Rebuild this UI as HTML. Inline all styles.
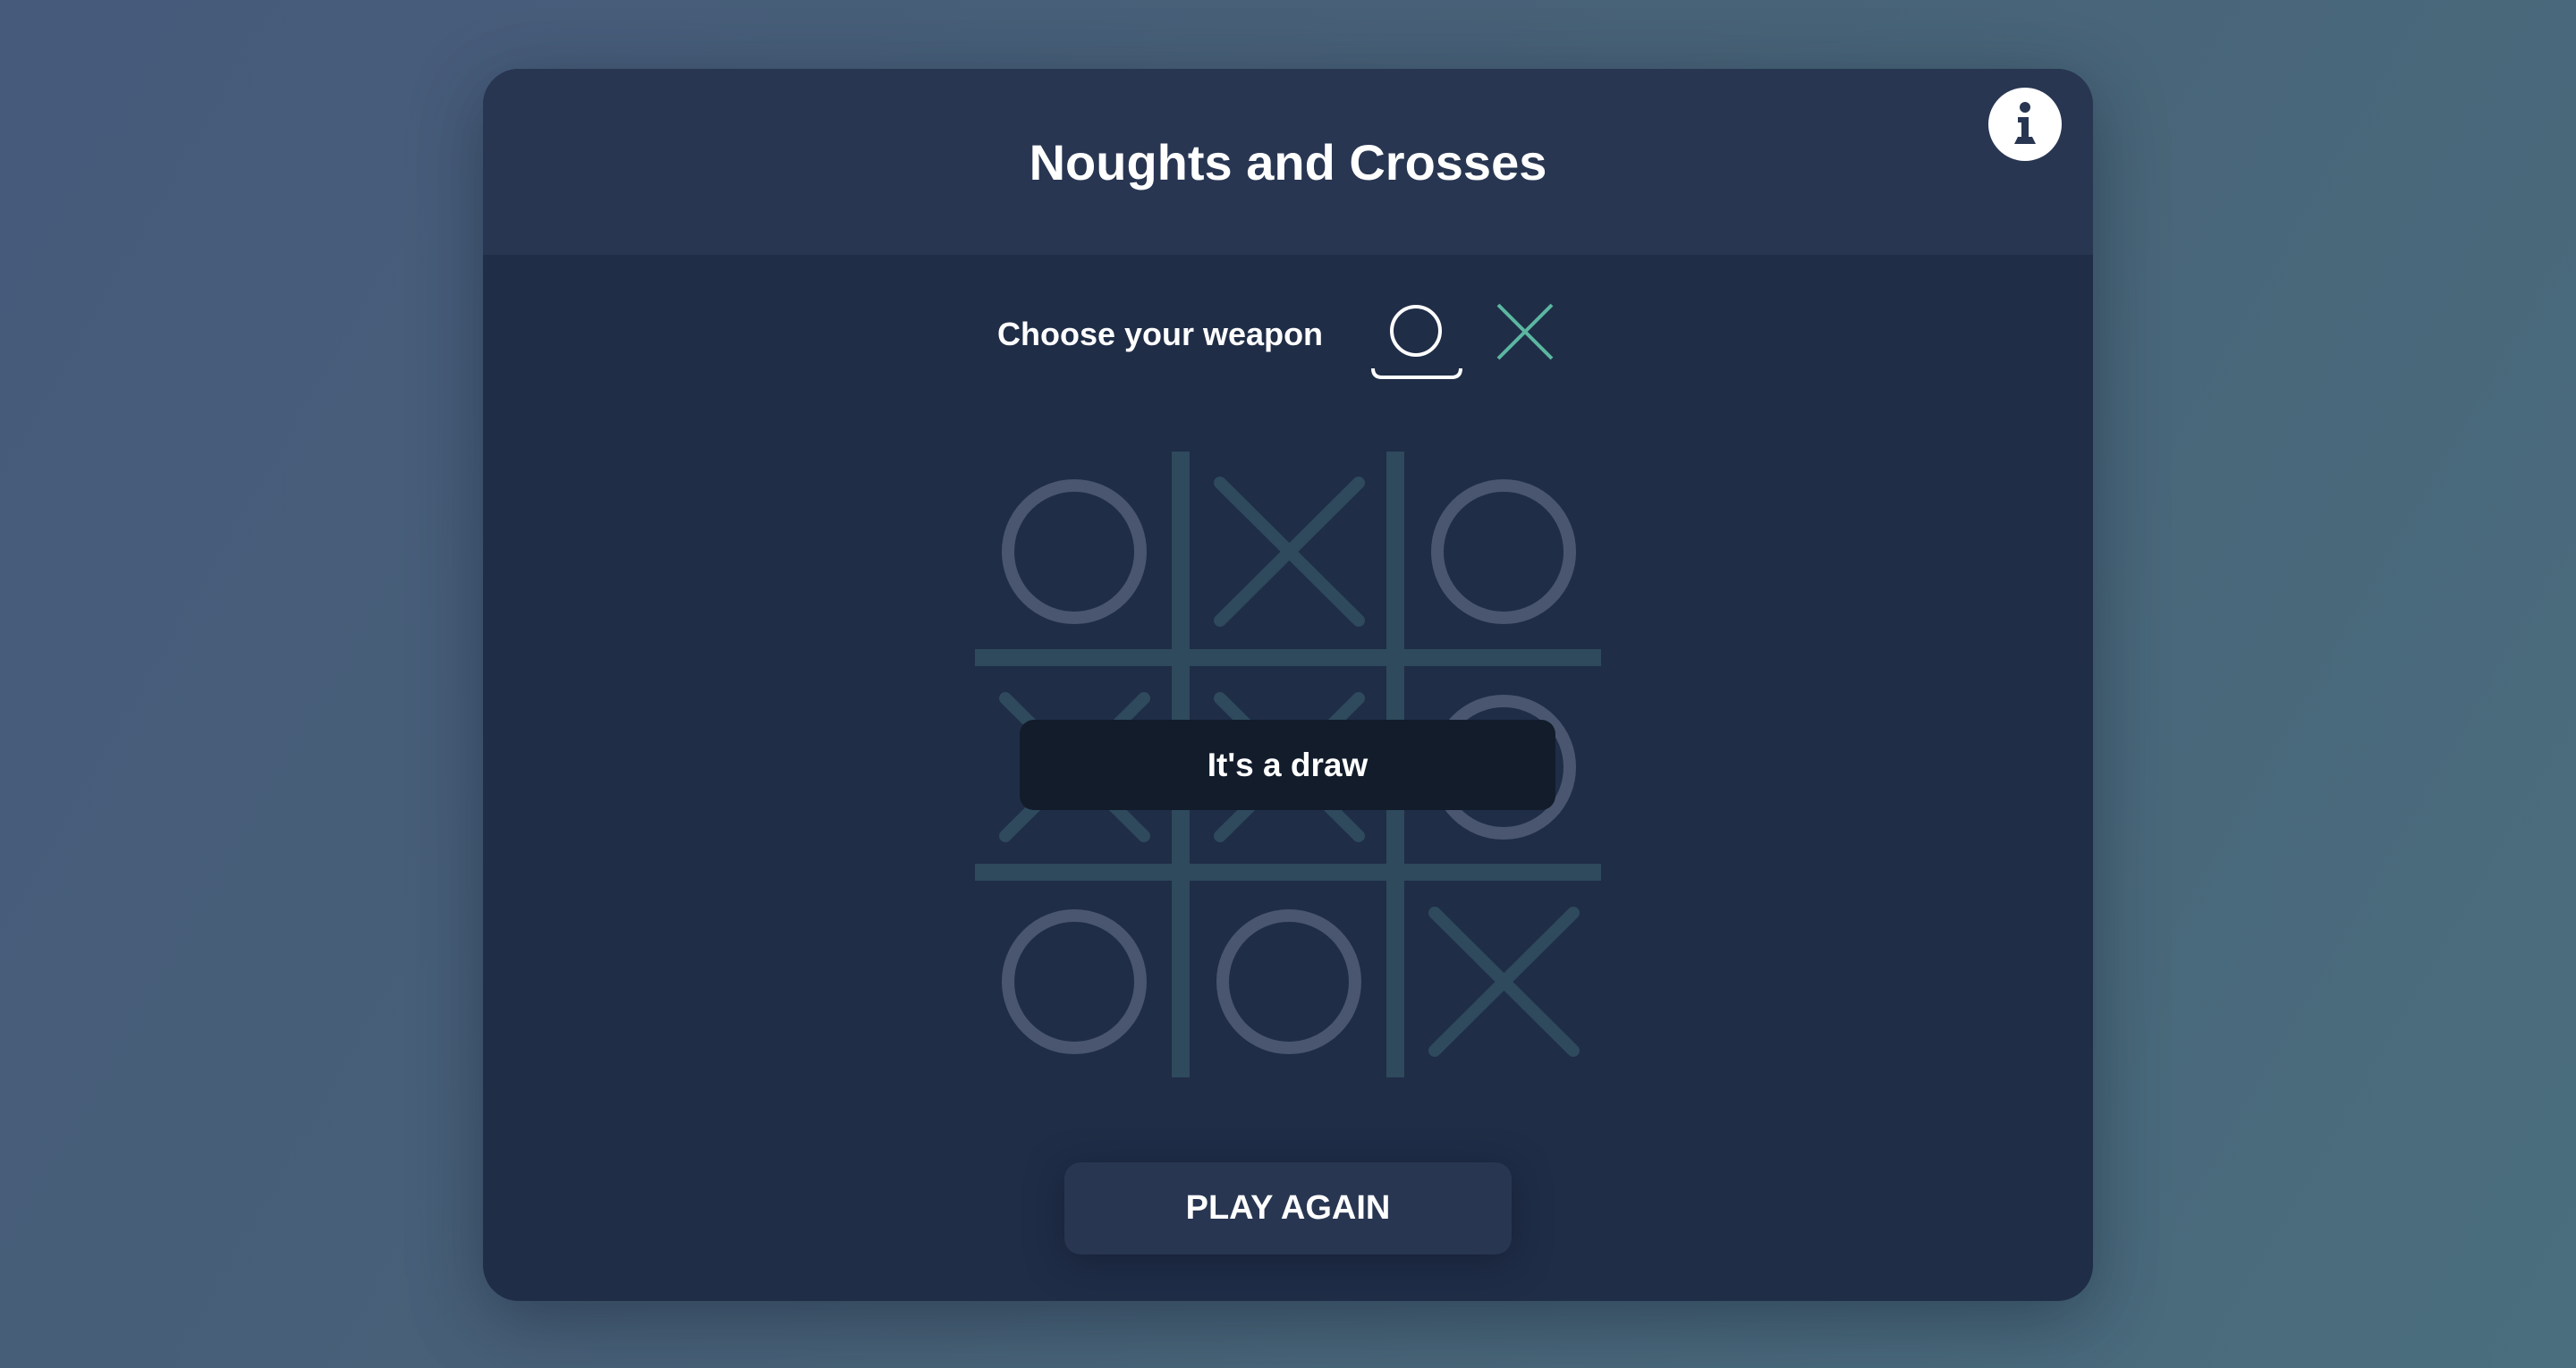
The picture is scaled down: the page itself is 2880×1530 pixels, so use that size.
<!DOCTYPE html>
<html><head><style>
html,body{margin:0;padding:0}
body{width:2880px;height:1530px;overflow:hidden;background:linear-gradient(120deg,#465a7b 0%,#486277 50%,#4a6e7e 100%);font-family:"Liberation Sans",Arial,sans-serif;position:relative}
.card{position:absolute;left:540px;top:77px;width:1800px;height:1378px;border-radius:40px;background:#1f2d47;overflow:hidden;box-shadow:0 20px 80px rgba(20,30,50,.45)}
.head{position:absolute;left:0;top:0;width:100%;height:208px;background:#283652}
.title{position:absolute;left:0;width:100%;top:70px;text-align:center;color:#fff;font-size:56px;font-weight:bold;line-height:70px}
.info{position:absolute;left:1683px;top:21px;width:82px;height:82px;border-radius:50%;background:#fff}
.weapon{position:absolute;left:575px;top:272px;color:#fff;font-size:36px;font-weight:bold;line-height:50px}
.btn{position:absolute;left:650px;top:1223px;width:500px;height:103px;border-radius:18px;background:#283652;color:#fff;font-size:38px;font-weight:bold;text-align:center;line-height:103px;box-shadow:0 8px 40px rgba(15,22,38,.5)}
.draw{position:absolute;left:600px;top:728px;width:599px;height:101px;border-radius:16px;background:#121c2b;color:#fff;font-size:37px;font-weight:bold;text-align:center;line-height:101px}
</style></head><body>
<div class="card">
 <div class="head"></div>
 <div class="title">Noughts and Crosses</div>
 <div class="info"><svg width="82" height="82" viewBox="0 0 82 82"><circle cx="41" cy="22" r="6" fill="#283652"/><path d="M33 33h12v22h4l4 8H29l4-8h4V39h-4z" fill="#283652"/></svg></div>
 <div class="weapon">Choose your weapon</div>
 <svg style="position:absolute;left:990px;top:250px" width="220" height="120" viewBox="0 0 220 120">
  <circle cx="53" cy="43" r="27" fill="none" stroke="#fff" stroke-width="4"/>
  <path d="M5 85q0 10 10 10h78q10 0 10-10" fill="none" stroke="#fff" stroke-width="4"/>
  <path d="M145 14l60 60M205 14l-60 60" stroke="#5bb7a0" stroke-width="4"/>
 </svg>
 <svg style="position:absolute;left:0;top:0" width="1800" height="1378" viewBox="540 77 1800 1378">
  <g fill="#2e4a5c">
   <rect x="1310" y="505" width="20" height="700"/>
   <rect x="1550" y="505" width="20" height="700"/>
   <rect x="1090" y="726" width="700" height="19"/>
   <rect x="1090" y="966" width="700" height="19"/>
  </g>
  <g fill="none" stroke="#4a5670" stroke-width="14">
   <circle cx="1201" cy="617" r="74"/>
   <circle cx="1681" cy="617" r="74"/>
   <circle cx="1681" cy="858" r="74"/>
   <circle cx="1201" cy="1098" r="74"/>
   <circle cx="1441" cy="1098" r="74"/>
  </g>
  <g stroke="#2e4a5c" stroke-width="14" stroke-linecap="round">
   <path d="M1364 540l155 154M1519 540l-155 154"/>
   <path d="M1124 781l155 154M1279 781l-155 154"/>
   <path d="M1364 781l155 154M1519 781l-155 154"/>
   <path d="M1604 1021l155 154M1759 1021l-155 154"/>
  </g>
 </svg>
 <div class="draw">It's a draw</div>
 <div class="btn">PLAY AGAIN</div>
</div>
</body></html>
